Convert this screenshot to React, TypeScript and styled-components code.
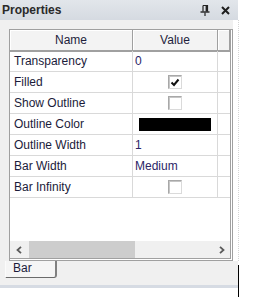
import React from 'react';
import styled, { createGlobalStyle } from 'styled-components';

const GlobalStyle = createGlobalStyle`
    body {
        margin: 0;
        background: #ffffff;
    }
`;

const Root = styled.div`
    width: 239px;
    display: flex;
    flex-direction: column;
    font-family: "Liberation Sans", Arial, sans-serif;
    font-size: 12px;
    color: #1b1b3a;
`;

const TitleBar = styled.div`
    width: 238px;
    height: 20px;
    box-sizing: border-box;
    padding: 0 8px 0 2px;
    display: flex;
    align-items: center;
    justify-content: space-between;
    background: linear-gradient(to bottom, #e2e6eb, #d5dae1);
`;

const Title = styled.span`
    font-weight: bold;
    color: #2a2a2a;
`;

const TitleButtons = styled.div`
    display: flex;
    align-items: center;
    gap: 11px;
`;

const Body = styled.div`
    display: flex;
    height: 241px;
`;

const MainPanel = styled.div`
    width: 233px;
    box-sizing: border-box;
    padding: 9px 0 0 9px;
    background: #f0f0f0;
`;

const SideStrip = styled.div`
    flex: 1;
    background: #ffffff;
    border-right: 1px dotted #d4d4d4;
`;

const Frame = styled.div`
    width: 224px;
    height: 232px;
    box-sizing: border-box;
    border-style: solid double double solid;
    border-width: 1px 3px 3px 1px;
    border-color: #a0a0a0;
    background: #ffffff;
    display: flex;
    flex-direction: column;
`;

const Grid = styled.div`
    display: grid;
    grid-template-columns: 123px 85px 12px;
    grid-auto-rows: 21px;
`;

const HeaderCell = styled.div`
    height: 22px;
    box-sizing: border-box;
    display: flex;
    align-items: center;
    justify-content: center;
    background: #f3f3f3;
    border-right: 1px solid #a0a0a0;
    border-bottom: 2px solid #a0a0a0;
    box-shadow: inset 1px 1px 0 #ffffff;
    color: #1e1e3c;
    &:last-child {
        border-right: none;
    }
`;

const Cell = styled.div<{ $center?: boolean; $value?: boolean }>`
    box-sizing: border-box;
    display: flex;
    align-items: center;
    justify-content: ${({ $center }) => ($center ? 'center' : 'flex-start')};
    padding-left: ${({ $value, $center }) => ($center ? '0' : $value ? '2px' : '4px')};
    border-right: 1px solid #d9d9d9;
    border-bottom: 1px solid #d9d9d9;
    color: ${({ $value }) => ($value ? '#2b2566' : '#1b1b3a')};
    white-space: nowrap;
`;

const FillerCell = styled.div`
    border-bottom: 1px solid #d9d9d9;
`;

const CheckBox = styled.div`
    width: 14px;
    height: 14px;
    box-sizing: border-box;
    border: 1px solid #a8a8a8;
    border-right-color: #dadada;
    border-bottom-color: #dadada;
    box-shadow: inset 1px 1px 0 #c6c6c6;
    background: #ffffff;
    display: flex;
    align-items: center;
    justify-content: center;
`;

const Swatch = styled.div<{ $color: string }>`
    width: 72px;
    height: 13px;
    margin-left: 4px;
    background: ${({ $color }) => $color};
`;

const Empty = styled.div`
    flex: 1;
`;

const ScrollBar = styled.div`
    height: 17px;
    display: flex;
    background: #f0f0f0;
`;

const ArrowButton = styled.div`
    width: 17px;
    display: flex;
    align-items: center;
    justify-content: center;
`;

const Thumb = styled.div`
    width: 106px;
    margin-left: 2px;
    background: #cdcdcd;
`;

const Track = styled.div`
    flex: 1;
`;

const Footer = styled.div`
    display: flex;
    height: 36px;
`;

const FooterMain = styled.div`
    width: 238px;
    display: flex;
    flex-direction: column;
`;

const TabStrip = styled.div`
    height: 24px;
    box-sizing: border-box;
    padding-left: 5px;
    background: #f0f0f0;
`;

const Tab = styled.div`
    width: 52px;
    height: 17px;
    box-sizing: border-box;
    padding-left: 7px;
    line-height: 15px;
    background: #f5f5f5;
    border-left: 1px solid #fbfbfb;
    border-right: 2px solid #808080;
    border-bottom: 1px solid #6a6a6a;
    border-bottom-right-radius: 3px;
    color: #1b1b3a;
`;

const DividerLine = styled.div`
    height: 3px;
    background: #d6dbe3;
`;

const BlackBar = styled.div`
    width: 1px;
    margin-top: 4px;
    background: #000000;
`;

type Row =
    | { name: string; kind: 'text'; value: string }
    | { name: string; kind: 'check'; checked: boolean }
    | { name: string; kind: 'color'; color: string };

const rows: Row[] = [
    { name: 'Transparency', kind: 'text', value: '0' },
    { name: 'Filled', kind: 'check', checked: true },
    { name: 'Show Outline', kind: 'check', checked: false },
    { name: 'Outline Color', kind: 'color', color: '#000000' },
    { name: 'Outline Width', kind: 'text', value: '1' },
    { name: 'Bar Width', kind: 'text', value: 'Medium' },
    { name: 'Bar Infinity', kind: 'check', checked: false },
];

const PinIcon = () => (
    <svg width="10" height="12" viewBox="0 0 10 12">
        <path d="M3 1.5 H7.5 V7.5 M3 1.5 V7.5" stroke="#222" strokeWidth="1.2" fill="none" />
        <rect x="5.6" y="1.5" width="1.9" height="6" fill="#222" />
        <path d="M0.5 8 H9.5" stroke="#222" strokeWidth="1.4" />
        <path d="M5 8.5 V12" stroke="#222" strokeWidth="1.2" />
    </svg>
);

const CloseIcon = () => (
    <svg width="9" height="9" viewBox="0 0 9 9">
        <path d="M1 1 L8 8 M8 1 L1 8" stroke="#1e1e1e" strokeWidth="2" />
    </svg>
);

const Check = () => (
    <svg width="10" height="9" viewBox="0 0 10 9">
        <path d="M1.5 4.5 L4 7 L8.5 1.5" stroke="#111" strokeWidth="2" fill="none" />
    </svg>
);

const Chevron = ({ left }: { left?: boolean }) => (
    <svg width="6" height="8" viewBox="0 0 6 8">
        <path d={left ? 'M5 0.8 L1.5 4 L5 7.2' : 'M1 0.8 L4.5 4 L1 7.2'} stroke="#5a5a5a" strokeWidth="1.8" fill="none" />
    </svg>
);

const ValueCell = ({ row }: { row: Row }) => {
    if (row.kind === 'check') {
        return (
            <Cell $center>
                <CheckBox>{row.checked && <Check />}</CheckBox>
            </Cell>
        );
    }
    if (row.kind === 'color') {
        return (
            <Cell $value>
                <Swatch $color={row.color} />
            </Cell>
        );
    }
    return <Cell $value>{row.value}</Cell>;
};

export default function App() {
    return (
        <Root>
            <GlobalStyle />
            <TitleBar>
                <Title>Properties</Title>
                <TitleButtons>
                    <PinIcon />
                    <CloseIcon />
                </TitleButtons>
            </TitleBar>
            <Body>
                <MainPanel>
                    <Frame>
                        <Grid>
                            <HeaderCell>Name</HeaderCell>
                            <HeaderCell>Value</HeaderCell>
                            <HeaderCell />
                            {rows.map((row) => (
                                <React.Fragment key={row.name}>
                                    <Cell>{row.name}</Cell>
                                    <ValueCell row={row} />
                                    <FillerCell />
                                </React.Fragment>
                            ))}
                        </Grid>
                        <Empty />
                        <ScrollBar>
                            <ArrowButton>
                                <Chevron left />
                            </ArrowButton>
                            <Thumb />
                            <Track />
                            <ArrowButton>
                                <Chevron />
                            </ArrowButton>
                        </ScrollBar>
                    </Frame>
                </MainPanel>
                <SideStrip />
            </Body>
            <Footer>
                <FooterMain>
                    <TabStrip>
                        <Tab>Bar</Tab>
                    </TabStrip>
                    <DividerLine />
                </FooterMain>
                <BlackBar />
            </Footer>
        </Root>
    );
}
